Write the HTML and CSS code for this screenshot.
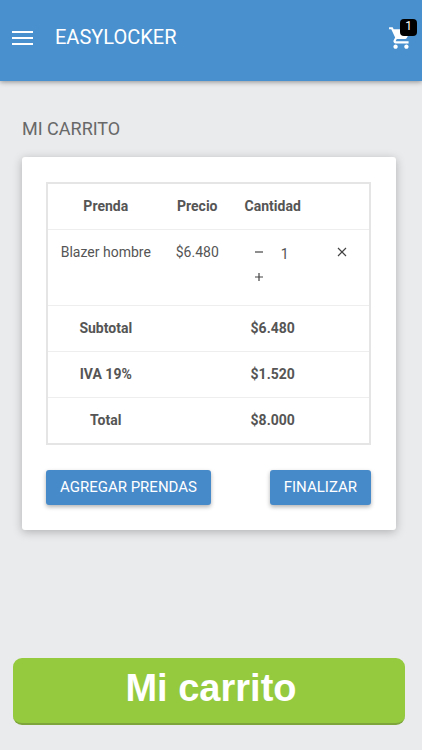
FILE: index.html
```html
<!DOCTYPE html>
<html lang="es">
<head>
  <meta charset="utf-8">
  <meta name="viewport" content="width=device-width, initial-scale=1">
  <title>EasyLocker</title>
  <link rel="stylesheet" href="styles.css">
</head>
<body>
  <header class="bar">
    <button class="bar-button" type="button" aria-label="Menú">
      <svg class="menu-icon" viewBox="0 0 22 16" aria-hidden="true">
        <path d="M0 2h21M0 8h21M0 14h21" stroke="currentColor" stroke-width="2"/>
      </svg>
    </button>
    <span class="brand">EASYLOCKER</span>
    <a class="cart" href="#carrito" aria-label="Carrito">
      <svg class="cart-icon" viewBox="0 0 24 24" aria-hidden="true">
        <path fill="currentColor" d="M7 18c-1.100 0-2 .9-2 2s.9 2 2 2 2-.9 2-2-.9-2-2-2zM1 2v2h2l3.600 7.590-1.350 2.450c-.160.280-.250.610-.250.960 0 1.100.9 2 2 2h12v-2H7.420c-.140 0-.250-.110-.250-.250l.030-.120.900-1.630h7.450c.750 0 1.410-.410 1.750-1.030l3.580-6.490A1 1 0 0 0 20 4H5.210l-.940-2H1zm16 16c-1.100 0-2 .9-2 2s.9 2 2 2 2-.9 2-2-.9-2-2-2z"/>
      </svg>
      <span class="badge">1</span>
    </a>
  </header>

  <main class="content" id="carrito">
    <h1 class="heading">MI CARRITO</h1>
    <section class="card">
      <table class="items">
        <colgroup>
          <col class="col-name">
          <col class="col-price">
          <col class="col-amount">
          <col class="col-remove">
        </colgroup>
        <thead>
          <tr><th>Prenda</th><th>Precio</th><th>Cantidad</th><th></th></tr>
        </thead>
        <tbody>
          <tr class="item">
            <td>Blazer hombre</td>
            <td>$6.480</td>
            <td>
              <div class="stepper">
                <button class="step" type="button" aria-label="Quitar uno">
                  <svg class="glyph" viewBox="0 0 10 10" aria-hidden="true"><path d="M1 5h8"/></svg>
                </button>
                <span class="count">1</span>
                <button class="step" type="button" aria-label="Agregar uno">
                  <svg class="glyph" viewBox="0 0 10 10" aria-hidden="true"><path d="M1 5h8M5 1v8"/></svg>
                </button>
              </div>
            </td>
            <td>
              <button class="step remove" type="button" aria-label="Eliminar">
                <svg class="glyph" viewBox="0 0 10 10" aria-hidden="true"><path d="M1 1l8 8M9 1l-8 8"/></svg>
              </button>
            </td>
          </tr>
        </tbody>
        <tfoot>
          <tr><th>Subtotal</th><th></th><th>$6.480</th><th></th></tr>
          <tr><th>IVA 19%</th><th></th><th>$1.520</th><th></th></tr>
          <tr><th>Total</th><th></th><th>$8.000</th><th></th></tr>
        </tfoot>
      </table>
      <div class="actions">
        <button class="action" type="button">AGREGAR PRENDAS</button>
        <button class="action" type="button">FINALIZAR</button>
      </div>
    </section>
  </main>

  <footer class="bottom">
    <button class="banner" type="button">Mi carrito</button>
  </footer>
</body>
</html>
```
FILE: styles.css
```css
* {
  box-sizing: border-box;
}

body {
  display: flex;
  flex-direction: column;
  min-height: 100vh;
  margin: 0;
  background: #eaebed;
  color: #555;
  font: 14px/20px Roboto, sans-serif;
}

button {
  border: 0;
  padding: 0;
  background: none;
  color: inherit;
  font: inherit;
}

svg {
  display: block;
}

.bar {
  display: flex;
  align-items: center;
  padding: 17px 8px 23px 12px;
  background: #4990ce;
  color: #fff;
  box-shadow: 0 1px 5px rgba(0, 0, 0, 0.4);
}

.menu-icon {
  width: 22px;
  height: 16px;
}

.brand {
  flex: 1;
  margin-left: 21px;
  font-size: 20px;
  line-height: 41px;
}

.cart {
  position: relative;
  color: inherit;
}

.cart-icon {
  width: 26px;
  height: 26px;
}

.badge {
  position: absolute;
  top: -6px;
  right: -3px;
  width: 17px;
  height: 17px;
  border-radius: 4px;
  background: #000;
  font-size: 12px;
  line-height: 14px;
  text-align: center;
}

.content {
  padding: 36px 26px 24px 22px;
}

.heading {
  margin: 0 0 16px;
  color: #686868;
  font-size: 18px;
  font-weight: 400;
  line-height: 24px;
}

.card {
  padding: 25px 25px 25px 24px;
  border-radius: 3px;
  background: #fff;
  box-shadow: 0 2px 10px rgba(0, 0, 0, 0.25);
}

.items {
  width: 100%;
  table-layout: fixed;
  border: 2px solid #e5e5e5;
  border-spacing: 0;
}

.col-name {
  width: 36%;
}

.col-price {
  width: 21%;
}

.col-amount {
  width: 26%;
}

.col-remove {
  width: 17%;
}

.items th,
.items td {
  height: 46px;
  padding: 12px 0;
  border-bottom: 1px solid #eee;
  text-align: center;
  vertical-align: top;
  white-space: nowrap;
}

.items tfoot tr:last-child th {
  height: 45px;
  border-bottom: 0;
}

.items .item td {
  height: 76px;
}

.stepper {
  display: grid;
  grid-template-columns: 24px 24px;
  justify-content: center;
  row-gap: 3px;
}

.step {
  display: flex;
  align-items: center;
  justify-content: center;
  width: 20px;
  height: 20px;
  color: #444;
}

.remove {
  margin: 0 auto;
}

.glyph {
  width: 10px;
  height: 10px;
  fill: none;
  stroke: currentColor;
  stroke-width: 1.2;
}

.count {
  padding-top: 2px;
}

.actions {
  display: flex;
  justify-content: space-between;
  margin-top: 25px;
}

.action {
  padding: 0 14px;
  border-radius: 3px;
  background: #478aca;
  color: #fff;
  font-size: 15px;
  line-height: 35px;
  box-shadow: 0 2px 4px rgba(0, 0, 0, 0.3);
}

.bottom {
  margin-top: auto;
  padding: 0 17px 25px 13px;
}

.banner {
  width: 100%;
  padding: 4px 0 9px 4px;
  border-bottom: 2px solid #7ea53c;
  border-radius: 9px;
  background: #95ca3e;
  color: #fff;
  font: bold 38px/52px "Liberation Sans", Arial, sans-serif;
}
```
